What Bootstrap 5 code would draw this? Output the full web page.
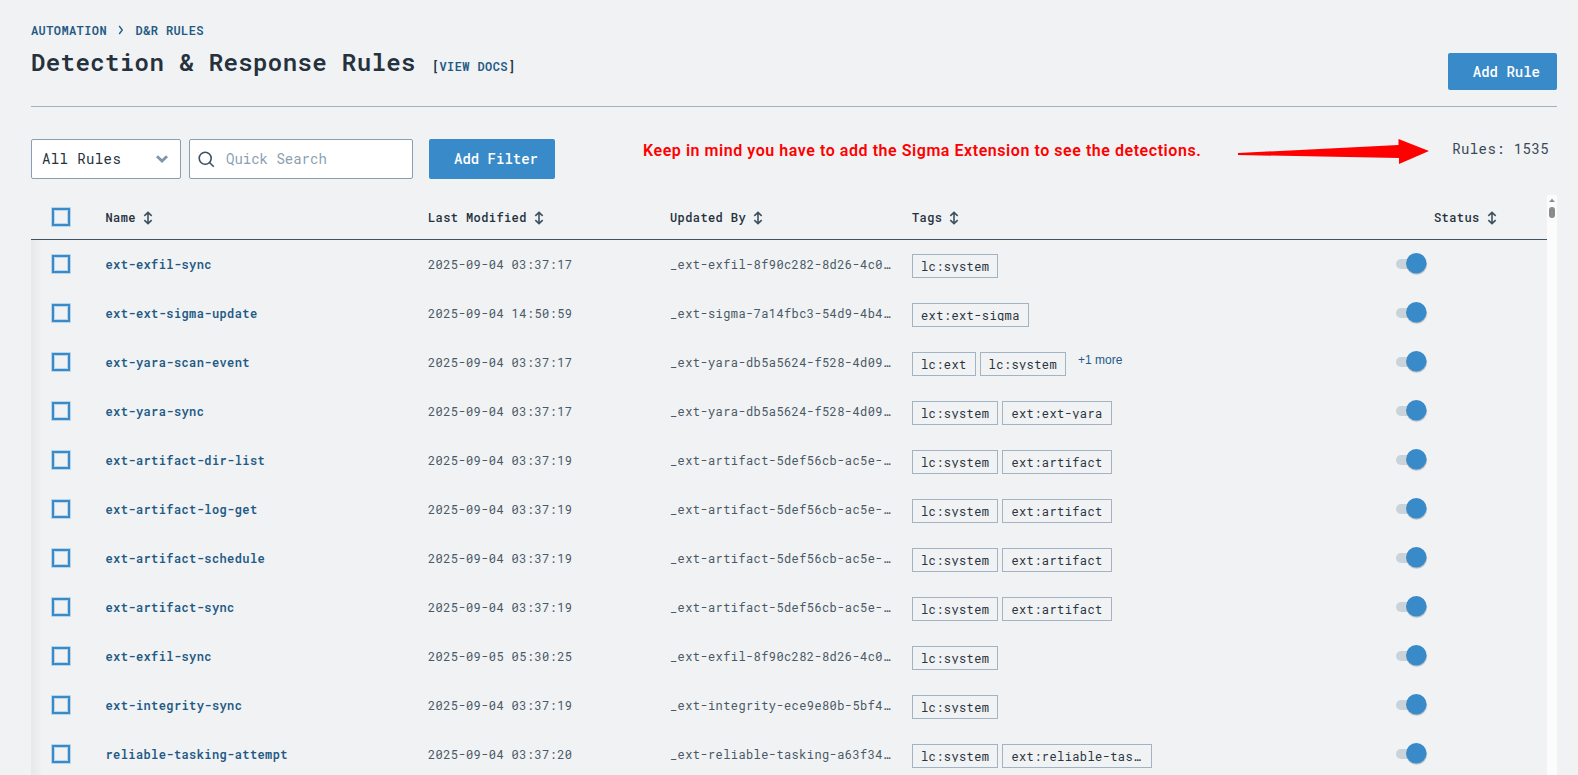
<!DOCTYPE html>
<html lang="en">
<head>
<meta charset="utf-8">
<title>Detection &amp; Response Rules</title>
<link href="https://cdn.jsdelivr.net/npm/bootstrap@5.3.0/dist/css/bootstrap.min.css" rel="stylesheet">
<style>
body{background:#f0f2f4;color:#25313c;font-family:"Roboto Mono","Liberation Mono",monospace;font-size:12px;letter-spacing:.4px;line-height:16px;height:775px;overflow:hidden}
a{color:#1f5a85;text-decoration:none}
.page{padding:22px 21px 0 31px;height:775px}
.crumbs{font-weight:600;height:16px;line-height:16px}
.crumbs svg{margin:0 11.500px 0 11px}
.headline{height:69px;border-bottom:1px solid #a0b2c2}
.headline h1{font-size:24px;font-weight:600;line-height:32px;margin:0}
.docs{font-weight:600;margin-left:16px}
.btn-main{background:#388ac9;color:#fff;border:0;border-radius:2px;font-size:14px;font-weight:500;letter-spacing:0;line-height:20px;padding:0 17px 0 25px}
.btn-main:hover{background:#2f7ab5;color:#fff}
.add-rule{height:37px;margin-top:15px}
.toolbar{margin-top:32px;height:40px}
.picker{width:150px;height:40px;background:#fff;border:1px solid #889eb2;border-radius:2px;font-size:14px;padding:0 12px 0 10px}
.finder{width:224px;height:40px;background:#fff;border:1px solid #889eb2;border-radius:2px;margin-left:8px;padding-left:8px}
.finder input{border:0;outline:0;background:transparent;width:180px;padding:0;margin-left:11px;font-size:14px;line-height:20px}
.finder input::placeholder{color:#8ba0b1;opacity:1}
.note{color:#f00;font-family:Roboto,sans-serif;font-weight:600;font-size:16px;letter-spacing:.55px;line-height:20px;margin-left:88px;margin-top:-17px;white-space:nowrap}
.total{font-size:14px;color:#3a4854;margin-right:8px;margin-top:-20px}
.listing{margin-top:16px;height:580px;overflow:hidden}
.rules{table-layout:fixed;width:1516px;margin:0;border-collapse:separate;border-spacing:0}
.rules th,.rules td{padding:0;vertical-align:middle;white-space:nowrap}
.rules th{height:45px;border-bottom:1px solid #3f5365;font-weight:500;color:#25313c}
.rules td{height:49px;padding-bottom:2px;color:#4a5966}
.rules td.rule-name{font-weight:600}
.rules tbody td:first-child{background:linear-gradient(90deg,#e6e8ea,#f0f2f4 12px)}
.boxed{display:block;margin-left:20px}
.sort{margin-left:7px;vertical-align:-3px}
.status-label{margin-left:35px}
.chip{border:1px solid #a2b3c3;height:24px;padding:5px 8px 0;color:#2a3540}
.chip span{display:block;height:12px;line-height:13px;overflow:hidden}
.chip.capped{width:150px}
.more{font-family:"Liberation Sans",Arial,sans-serif;letter-spacing:0;margin-left:8px;margin-top:-8px}
.toggle{display:block;margin-left:-6px}
.rail{width:10px;background:#fcfcfc}
</style>
</head>
<body>
<main class="page">
  <nav class="crumbs d-flex align-items-center"><a href="#">AUTOMATION</a><svg width="6" height="10" viewBox="0 0 6 10" fill="none" stroke="#1f5a85" stroke-width="1.3"><path d="M1.200 1 4.300 5 1.200 9"/></svg><a href="#">D&amp;R RULES</a></nav>
  <header class="headline d-flex justify-content-between">
    <div class="d-flex align-items-baseline pt-2">
      <h1>Detection &amp; Response Rules</h1>
      <span class="docs">[<a href="#">VIEW DOCS</a>]</span>
    </div>
    <button class="btn btn-main add-rule">Add Rule</button>
  </header>
  <section class="toolbar d-flex align-items-center">
    <div class="picker d-flex align-items-center justify-content-between"><span>All Rules</span><svg width="12" height="8" viewBox="0 0 12 8" fill="none" stroke="#8195a8" stroke-width="2.8"><path d="M1 1.2 6 6 11 1.2"/></svg></div>
    <div class="finder d-flex align-items-center"><svg width="17" height="17" viewBox="0 0 17 17" fill="none" stroke="#3f5160" stroke-width="1.6"><circle cx="7.2" cy="7.2" r="6"/><path d="m11.5 11.5 4.3 4.3"/></svg><input placeholder="Quick Search" aria-label="Quick Search"></div>
    <button class="btn btn-main h-100 ms-3">Add Filter</button>
    <div class="note">Keep in mind you have to add the Sigma Extension to see the detections.</div>
    <svg class="ms-auto" width="191" height="25" viewBox="0 0 191 25" style="margin-right:23px;margin-top:-15px"><path fill="red" d="M0 14 160.500 6V0l30.500 12-30 13v-6L0 16Z"/></svg>
    <div class="total">Rules: 1535</div>
  </section>
  <section class="listing d-flex">
    <table class="rules">
      <colgroup><col style="width:74.5px"><col style="width:322.5px"><col style="width:242px"><col style="width:242px"><col style="width:487px"><col style="width:148px"></colgroup>
      <thead><tr id="head"></tr></thead>
      <tbody id="rows"></tbody>
    </table>
    <div class="rail"><svg width="10" height="26" viewBox="0 0 10 26" fill="#8b8b8b" class="d-block"><path d="m2 7 3-3.200L8 7Z"/><rect x="2" y="12" width="6" height="11" rx="3"/></svg></div>
  </section>
</main>
<script src="https://cdn.jsdelivr.net/npm/bootstrap@5.3.0/dist/js/bootstrap.bundle.min.js"></script>
<script>
const box='<svg class="boxed" width="20" height="20" viewBox="0 0 20 20" fill="none"><path stroke="#b9d5ea" stroke-width="1" d="M.5.5h19v19H.5zM3.500 3.500h13v13h-13z"/><path stroke="#388ac9" stroke-width="2" d="M2 2h16v16H2z"/></svg>';
const sort='<svg class="sort" width="10" height="14" viewBox="0 0 10 14" fill="none" stroke="#3f505e" stroke-width="1.6"><path d="M5 1.600v10.800M1.300 4.800 5 1.300l3.700 3.500M1.300 9.200 5 12.700l3.700-3.500"/></svg>';
const toggle='<svg class="toggle" width="36" height="26" viewBox="0 0 36 26"><rect x="3" y="8" width="26" height="10" rx="5" fill="#cbd3da"/><circle cx="23.600" cy="13.300" r="10.500" fill="#7d8790" opacity=".45"/><circle cx="23.300" cy="12.200" r="10.200" fill="#388ac9"/></svg>';
document.getElementById('head').innerHTML='<th>'+box+'</th>'+['Name','Last Modified','Updated By','Tags'].map(t=>`<th>${t}${sort}</th>`).join('')+`<th><span class="status-label">Status${sort}</span></th>`;
const data=[
['ext-exfil-sync','04 03:37:17','_ext-exfil-8f90c282-8d26-4c0…','lc:system'],
['ext-ext-sigma-update','04 14:50:59','_ext-sigma-7a14fbc3-54d9-4b4…','ext:ext-sigma'],
['ext-yara-scan-event','04 03:37:17','_ext-yara-db5a5624-f528-4d09…','lc:ext lc:system',1],
['ext-yara-sync','04 03:37:17','_ext-yara-db5a5624-f528-4d09…','lc:system ext:ext-yara'],
['ext-artifact-dir-list','04 03:37:19','_ext-artifact-5def56cb-ac5e-…','lc:system ext:artifact'],
['ext-artifact-log-get','04 03:37:19','_ext-artifact-5def56cb-ac5e-…','lc:system ext:artifact'],
['ext-artifact-schedule','04 03:37:19','_ext-artifact-5def56cb-ac5e-…','lc:system ext:artifact'],
['ext-artifact-sync','04 03:37:19','_ext-artifact-5def56cb-ac5e-…','lc:system ext:artifact'],
['ext-exfil-sync','05 05:30:25','_ext-exfil-8f90c282-8d26-4c0…','lc:system'],
['ext-integrity-sync','04 03:37:19','_ext-integrity-ece9e80b-5bf4…','lc:system'],
['reliable-tasking-attempt','04 03:37:20','_ext-reliable-tasking-a63f34…','lc:system ext:reliable-tas…']];
document.getElementById('rows').innerHTML=data.map(([n,d,u,t,m])=>`<tr><td>${box}</td><td class="rule-name"><a href="#">${n}</a></td><td>2025-09-${d}</td><td>${u}</td><td><div class="d-flex align-items-center gap-1 pt-1">${t.split(' ').map(x=>`<div class="chip${x.endsWith('…')?' capped':''}"><span>${x}</span></div>`).join('')}${m?'<a class="more" href="#">+1 more</a>':''}</div></td><td>${toggle}</td></tr>`).join('');
</script>
</body>
</html>
